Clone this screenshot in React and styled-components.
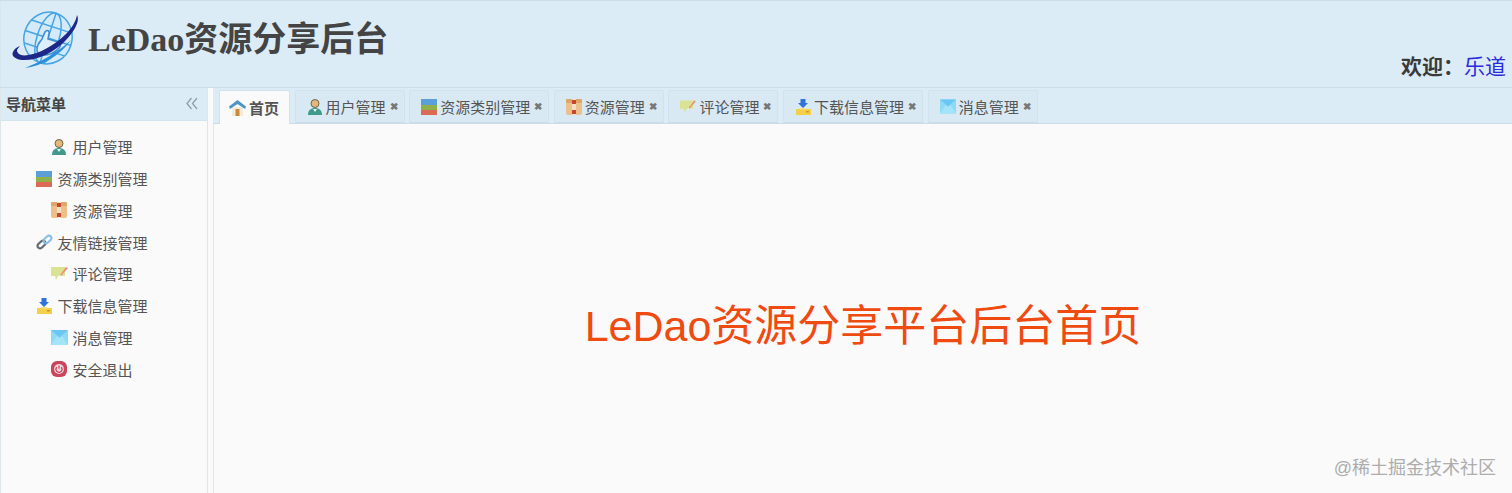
import styled, { createGlobalStyle } from 'styled-components';

const Global = createGlobalStyle`
  html, body { margin: 0; padding: 0; height: 100%; background: #fafafa; }
  #root { height: 100%; }
  * { box-sizing: border-box; }
`;

const SANS = `"Liberation Sans", "Noto Sans CJK SC", sans-serif`;

const Page = styled.div`
  position: relative;
  display: flex;
  flex-direction: column;
  width: 1512px;
  height: 493px;
  overflow: hidden;
  font-family: ${SANS};
  color: #444;
  background: #fafafa;
`;

const Header = styled.header`
  display: flex;
  justify-content: space-between;
  align-items: flex-start;
  flex: 0 0 88px;
  padding: 0 6px 0 11px;
  background: #dbecf6;
  border-top: 1px solid #c9dce8;
  border-left: 1px solid #d8e6ee;
  border-bottom: 1px solid #c9dce8;
`;

const Brand = styled.div`
  display: flex;
  align-items: center;
  gap: 8px;
  padding-top: 10px;
`;

const Title = styled.h1`
  margin: 0;
  font-family: "Liberation Serif", "Noto Sans CJK SC", serif;
  font-size: 34px;
  font-weight: 700;
  line-height: 56px;
  color: #444;
`;

const Welcome = styled.div`
  margin-top: 51px;
  font-size: 21px;
  line-height: 30px;
  font-weight: 700;
  color: #3a3a3a;

  a {
    font-weight: 400;
    color: #2a2ae0;
    text-decoration: none;
  }
`;

const Body = styled.div`
  display: flex;
  flex: 1;
  min-height: 0;
`;

const Side = styled.aside`
  display: flex;
  flex-direction: column;
  flex: 0 0 208px;
  background: #fafafa;
  border-left: 1px solid #dfe6ea;
  border-right: 1px solid #dfe6ea;
`;

const SideHead = styled.div`
  display: flex;
  align-items: center;
  justify-content: space-between;
  flex: 0 0 33px;
  padding: 0 9px 2px 5px;
  background: #dbecf6;
  border-bottom: 1px solid #d3e4ee;
  font-size: 15px;
  font-weight: 700;
  color: #444;
`;

const Menu = styled.nav`
  display: flex;
  flex-direction: column;
  padding-top: 10px;
`;

const MenuItem = styled.div`
  display: flex;
  align-items: center;
  justify-content: center;
  gap: 5px;
  height: 31.75px;
  padding-right: 24px;
  font-size: 15px;
  color: #555;

  svg { flex: none; }
`;

const IconSlot = styled.span`
  display: flex;
  justify-content: center;
  width: 16px;
`;

const Splitter = styled.div`
  flex: 0 0 5px;
  background: #fafafa;
`;

const Main = styled.main`
  display: flex;
  flex-direction: column;
  flex: 1;
  min-width: 0;
  border-left: 1px solid #dfe6ea;
`;

const TabBar = styled.div`
  display: flex;
  align-items: flex-end;
  gap: 4.6px;
  flex: 0 0 36px;
  margin-left: -1px;
  padding-left: 6px;
  background: #dbecf6;
  border-bottom: 1px solid #c9dce8;
`;

const Tab = styled.div`
  display: flex;
  align-items: center;
  gap: 3px;
  height: ${p => (p.$active ? '34px' : '33px')};
  margin-bottom: ${p => (p.$active ? '-1px' : '0')};
  padding: 0 ${p => (p.$active ? '10px' : '6px')} 0 ${p => (p.$active ? '9px' : '11px')};
  font-size: 15px;
  font-weight: ${p => (p.$active ? 700 : 400)};
  color: #555;
  background: ${p => (p.$active ? '#fafafa' : '#d8e9f4')};
  border: 1px solid #d0e2ee;
  border-bottom: ${p => (p.$active ? '0' : '1px solid #c9dce8')};
  border-radius: 2px 2px 0 0;
`;

const Close = styled.span`
  display: block;
  width: 8px;
  margin-left: 1px;
  font-size: 10px;
  font-weight: 700;
  line-height: 1;
  text-align: center;
  color: #777;
`;

const Content = styled.div`
  display: flex;
  justify-content: center;
  flex: 1;
  padding-top: 174px;
  background: #fafafa;
`;

const Headline = styled.div`
  font-size: 43px;
  line-height: 56px;
  color: #ef4a10;
`;

const Watermark = styled.div`
  position: absolute;
  right: 16px;
  bottom: 14px;
  font-size: 18px;
  line-height: 22px;
  color: #adadad;
`;

const Logo = () => (
  <svg width="68" height="58" viewBox="0 0 68 58" fill="none">
    <g stroke="#45a5e6" strokeWidth="1.5">
      <g transform="rotate(18 36 27)">
        <ellipse cx="36" cy="27" rx="24" ry="26" fill="#d4eaf8" />
        <ellipse cx="36" cy="27" rx="11" ry="26" />
        <path d="M36 1v52M14 15h44M12 27h48M15 39h42" />
      </g>
    </g>
    <path d="M28 44c-3-1-4-6-2-10 1-3 3-4 4-6l3-7c2-3 5-1 4 2l-1 5 10 3c3 1 3 4 1 6-3 4-10 8-19 7z" fill="#dceffa" stroke="#3f8ed0" strokeWidth="1.6" />
    <path d="M65 4c3 6-2 15-11 25C42 42 24 50 10 49c-7-1-11-4-9-8 1-3 4-5 7-6-3 3-4 5-2 7 2 3 8 3 15 1 11-3 24-11 33-20 6-6 10-13 11-19z" fill="#1c2788" />
    <path d="M59 29C47 46 29 55 13 57 28 51 45 42 59 29z" fill="#2d8fdc" />
  </svg>
);

const Collapse = () => (
  <svg width="12" height="13" viewBox="0 0 12 13" fill="none" stroke="#8aa0ae" strokeWidth="1.3">
    <path d="M5.5 1 1 6.5 5.5 12M11 1 6.5 6.5 11 12" />
  </svg>
);

const UserIcon = () => (
  <svg width="16" height="18" viewBox="0 0 16 18">
    <path d="M1 17c0-5 3-7 7-7s7 2 7 7z" fill="#3f9a8c" />
    <path d="M6 11l2 3 2-3z" fill="#e8f4f0" />
    <circle cx="8" cy="5.5" r="4" fill="#e6b877" stroke="#6b6350" strokeWidth="1" />
  </svg>
);

const TypeIcon = () => (
  <svg width="16" height="16" viewBox="0 0 16 16" shapeRendering="crispEdges">
    <rect y="0" width="16" height="6" fill="#5a9fd8" />
    <rect y="6" width="16" height="5" fill="#8fb04a" />
    <rect y="11" width="16" height="5" fill="#dd6a55" />
  </svg>
);

const BoxIcon = () => (
  <svg width="16" height="16" viewBox="0 0 16 16">
    <rect width="16" height="16" rx="2" fill="#ecc08a" />
    <rect y="0" width="16" height="4" rx="1" fill="#dba868" />
    <rect x="6" width="4" height="16" fill="#f4dfc2" />
    <rect x="6" y="1" width="4" height="4" fill="#c8452f" />
    <rect x="6" y="11" width="4" height="4" fill="#c8452f" />
  </svg>
);

const LinkIcon = () => (
  <svg width="17" height="16" viewBox="0 0 17 16" fill="none" strokeWidth="2.2">
    <rect x="-4.5" y="-2.5" width="9" height="5" rx="2.5" transform="translate(5.5 10.5) rotate(-42)" stroke="#5f6a72" />
    <rect x="-4.5" y="-2.5" width="9" height="5" rx="2.5" transform="translate(11.5 5.5) rotate(-42)" stroke="#8cc0e6" />
  </svg>
);

const CommentIcon = () => (
  <svg width="17" height="15" viewBox="0 0 17 15">
    <path d="M0 1h14v9H7l-2 4-1-4H0z" fill="#d9e393" />
    <path d="M9 9l6-8 2 1-7 8z" fill="#ee9078" />
    <path d="M9 9l1 1-2 1z" fill="#fafafa" />
  </svg>
);

const DownloadIcon = () => (
  <svg width="16" height="16" viewBox="0 0 16 16">
    <path d="M5.5 0h5v4H13l-5 5-5-5h2.5z" fill="#2f72d8" />
    <rect x="1" y="10" width="15" height="6" fill="#f5cf4a" />
    <path d="M5 9h6v1.5H5z" fill="#f8e28a" />
    <rect x="11" y="12" width="3" height="1.5" fill="#c79a2a" />
  </svg>
);

const MailIcon = () => (
  <svg width="17" height="15" viewBox="0 0 17 15">
    <rect width="17" height="15" fill="#8ddaf6" />
    <path d="M0 0l8.5 7.5L17 0z" fill="#6cc6f2" />
    <path d="M0 15l6-9 2.5 2 2.500-2 6 9z" fill="#a4e4f9" />
  </svg>
);

const PowerIcon = () => (
  <svg width="16" height="16" viewBox="0 0 16 16" fill="none">
    <rect width="16" height="16" rx="6" fill="#c8455c" />
    <circle cx="8" cy="8" r="5" fill="#f0d5da" />
    <path d="M5.8 6.2a3 3 0 1 0 4.4 0" stroke="#c8455c" strokeWidth="1.2" />
    <path d="M8 4.6v3.2" stroke="#c8455c" strokeWidth="1.2" />
  </svg>
);

const HomeIcon = () => (
  <svg width="17" height="16" viewBox="0 0 17 16">
    <path d="M3 7h11v9H3z" fill="#f3ead9" />
    <rect x="6.5" y="9" width="4" height="7" fill="#c98a3e" />
    <path d="M8.5 0 0 6.5 1 9l7.5-5L16 9l1-2.5z" fill="#4a96c8" />
  </svg>
);

const menu = [
  { label: '用户管理', Icon: UserIcon },
  { label: '资源类别管理', Icon: TypeIcon },
  { label: '资源管理', Icon: BoxIcon },
  { label: '友情链接管理', Icon: LinkIcon },
  { label: '评论管理', Icon: CommentIcon },
  { label: '下载信息管理', Icon: DownloadIcon },
  { label: '消息管理', Icon: MailIcon },
  { label: '安全退出', Icon: PowerIcon },
];

const tabs = [
  { label: '用户管理', Icon: UserIcon },
  { label: '资源类别管理', Icon: TypeIcon },
  { label: '资源管理', Icon: BoxIcon },
  { label: '评论管理', Icon: CommentIcon },
  { label: '下载信息管理', Icon: DownloadIcon },
  { label: '消息管理', Icon: MailIcon },
];

const App = () => (
  <Page>
    <Global />
    <Header>
      <Brand>
        <Logo />
        <Title>LeDao资源分享后台</Title>
      </Brand>
      <Welcome>欢迎：<a href="#">乐道</a></Welcome>
    </Header>
    <Body>
      <Side>
        <SideHead>
          导航菜单
          <Collapse />
        </SideHead>
        <Menu>
          {menu.map(({ label, Icon }) => (
            <MenuItem key={label}>
              <IconSlot><Icon /></IconSlot>
              {label}
            </MenuItem>
          ))}
        </Menu>
      </Side>
      <Splitter />
      <Main>
        <TabBar>
          <Tab $active>
            <HomeIcon />
            首页
          </Tab>
          {tabs.map(({ label, Icon }) => (
            <Tab key={label}>
              <IconSlot><Icon /></IconSlot>
              {label}
              <Close>✖</Close>
            </Tab>
          ))}
        </TabBar>
        <Content>
          <Headline>LeDao资源分享平台后台首页</Headline>
        </Content>
      </Main>
    </Body>
    <Watermark>@稀土掘金技术社区</Watermark>
  </Page>
);

export default App;
